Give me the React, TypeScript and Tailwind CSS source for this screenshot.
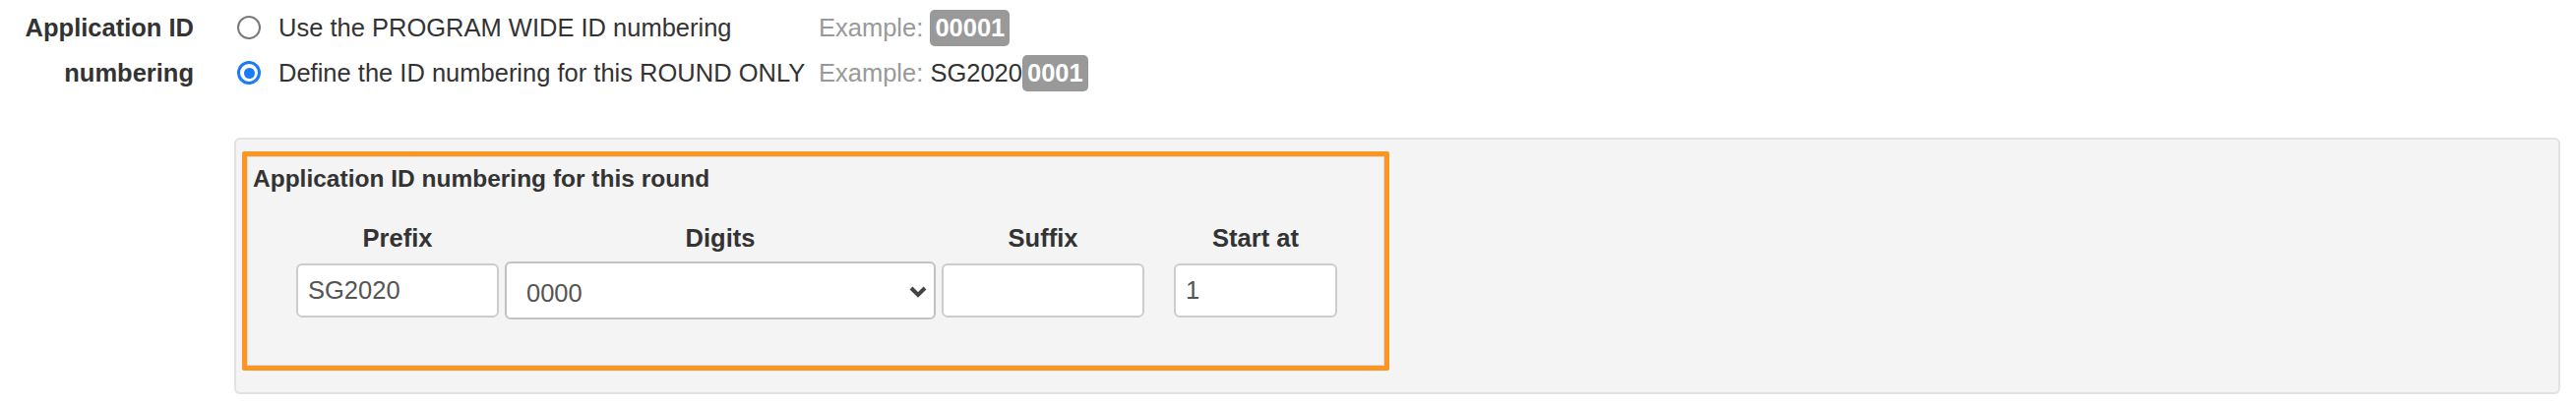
import React from "react";

function Radio({ checked }: { checked?: boolean }) {
  if (checked) {
    return (
      <div className="ml-[3px] w-[24px] h-[24px] shrink-0 rounded-full border-[3px] border-[#1b7cf6] bg-white flex items-center justify-center">
        <div className="w-[11px] h-[11px] rounded-full bg-[#1b7cf6]" />
      </div>
    );
  }
  return <div className="ml-[3px] w-[24px] h-[24px] shrink-0 rounded-full border-[2px] border-[#7a7a7a] bg-white" />;
}

function Badge({ children }: { children: React.ReactNode }) {
  return (
    <span className="inline-block bg-[#999999] text-white font-bold rounded-[5px] px-[5px] py-[5px] leading-[27px]">
      {children}
    </span>
  );
}

export default function App() {
  return (
    <div className="w-[2618px] h-[412px] bg-white flex font-['Liberation_Sans',Arial,Helvetica,sans-serif] text-[#333333]">
      <div className="w-[200px] shrink-0 pt-[5px] pr-[3px] text-right font-bold text-[25.5px] leading-[46px] font-['Liberation_Sans_Narrow','Arial_Narrow','Liberation_Sans',sans-serif]">
        Application ID
        <br />
        numbering
      </div>
      <div className="ml-[38px] mr-[16px] flex-1 flex flex-col">
        <div className="pt-[5px] text-[25.5px]">
          <div className="flex items-center h-[46px]">
            <Radio />
            <span className="ml-[18px] w-[549px] shrink-0 whitespace-nowrap leading-[46px]">
              Use the PROGRAM WIDE ID numbering
            </span>
            <span className="whitespace-nowrap leading-[46px]">
              <span className="text-[#999999]">Example: </span>
              <Badge>00001</Badge>
            </span>
          </div>
          <div className="flex items-center h-[46px]">
            <Radio checked />
            <span className="ml-[18px] w-[549px] shrink-0 whitespace-nowrap leading-[46px]">
              Define the ID numbering for this ROUND ONLY
            </span>
            <span className="whitespace-nowrap leading-[46px]">
              <span className="text-[#999999]">Example: </span>
              <span>SG2020</span>
              <Badge>0001</Badge>
            </span>
          </div>
        </div>

        <div className="mt-[43px] h-[261px] border-2 border-[#e2e2e2] bg-[#f4f4f4] rounded-[6px] pl-[6px] pt-[12px]">
          <div className="w-[1166px] h-[223px] border-[5px] border-[#fd9620] rounded-[2px]">
            <div className="h-full border border-[#dcdcdc] flex flex-col">
              <div className="pl-[5px] pt-[4px] font-bold text-[24.5px] leading-[36px]">
                Application ID numbering for this round
              </div>
              <div className="pl-[49px] mt-[24px] flex font-bold text-[25.5px] leading-[36px]">
                <div className="w-[206px] text-center">Prefix</div>
                <div className="ml-[6px] w-[438px] text-center">Digits</div>
                <div className="ml-[6px] w-[206px] text-center">Suffix</div>
                <div className="ml-[30px] w-[166px] text-center">Start at</div>
              </div>
              <div className="pl-[49px] mt-[6px] flex items-center text-[25.5px] text-[#555555]">
                <input
                  readOnly
                  value="SG2020"
                  className="w-[206px] h-[55px] bg-white border-2 border-[#cccccc] rounded-[6px] px-[10px] outline-none text-[#555555]"
                />
                <div className="ml-[6px] w-[438px] h-[59px] bg-white border-2 border-[#c2c2c2] rounded-[6px] pl-[20px] pr-[6px] pt-[6px] flex items-center justify-between">
                  <span>0000</span>
                  <svg width="20" height="14" viewBox="0 0 20 14" className="mb-[4px]">
                    <polyline points="3,3 10,10 17,3" fill="none" stroke="#444444" strokeWidth="4" />
                  </svg>
                </div>
                <input
                  readOnly
                  value=""
                  className="ml-[6px] w-[206px] h-[55px] bg-white border-2 border-[#cccccc] rounded-[6px] px-[10px] outline-none"
                />
                <input
                  readOnly
                  value="1"
                  className="ml-[30px] w-[166px] h-[55px] bg-white border-2 border-[#cccccc] rounded-[6px] px-[10px] outline-none text-[#555555]"
                />
              </div>
            </div>
          </div>
        </div>
      </div>
    </div>
  );
}
